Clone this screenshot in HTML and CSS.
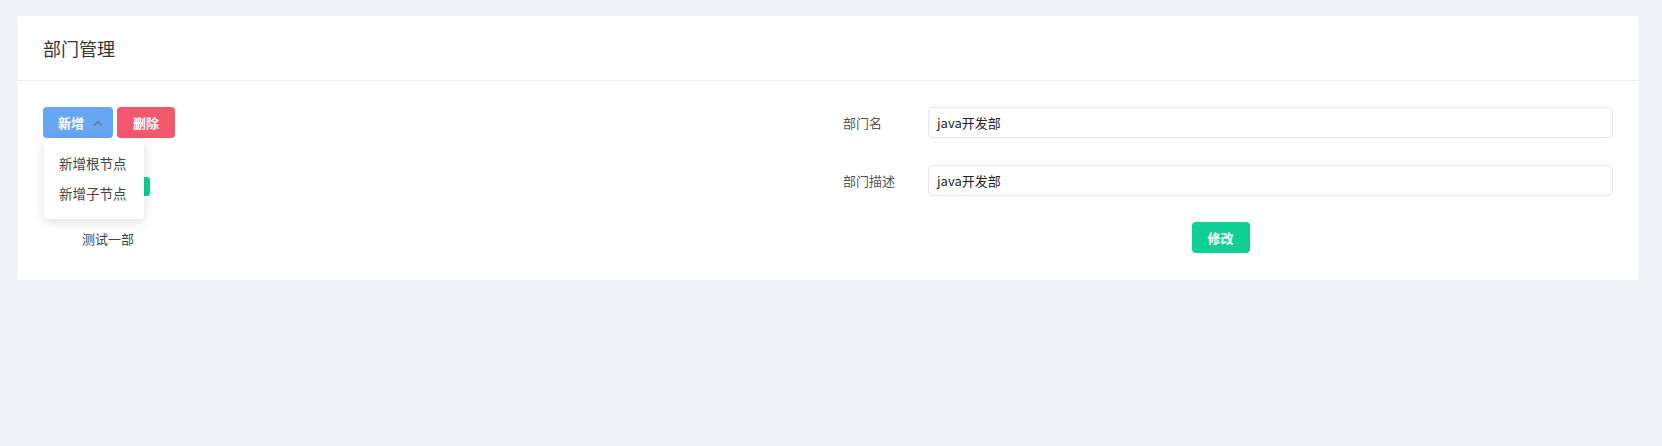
FILE: index.html
```html
<!DOCTYPE html>
<html lang="zh">
<head>
<meta charset="utf-8">
<title>部门管理</title>
<link rel="stylesheet" href="styles.css">
</head>
<body>
<div class="page">
  <div class="card">
    <div class="card-header">部门管理</div>
    <div class="card-body">
      <div class="col col-left">
        <div class="toolbar">
          <div class="dropdown">
            <button class="btn btn-blue btn-add">新增
              <svg class="chev" width="10" height="6" viewBox="0 0 10 6"><polyline points="1,5.5 5,1.5 9,5.5" fill="none" stroke="#6b7280" stroke-width="1.2"/></svg>
            </button>
            <ul class="menu">
              <li>新增根节点</li>
              <li>新增子节点</li>
            </ul>
          </div>
          <button class="btn btn-red">删除</button>
        </div>
        <div class="tree">
          <div class="node node-root"><span class="node-label selected">java开发部</span></div>
          <div class="node node-child"><span class="node-label">测试一部</span></div>
        </div>
      </div>
      <div class="col col-right">
        <div class="form-item">
          <label class="form-label">部门名</label>
          <div class="input">java开发部</div>
        </div>
        <div class="form-item">
          <label class="form-label">部门描述</label>
          <div class="input">java开发部</div>
        </div>
        <div class="form-actions">
          <button class="btn btn-green">修改</button>
        </div>
      </div>
    </div>
  </div>
</div>
</body>
</html>
```
FILE: styles.css
```css
* { box-sizing: border-box; }
html, body {
  margin: 0;
  padding: 0;
  background: #f0f3f7;
  font-family: "Noto Sans CJK SC", "Noto Sans", sans-serif;
  color: #333;
}
.page {
  padding: 16px 24px 16px 18px;
}
.card {
  background: #fff;
  border-radius: 4px;
}
.card-header {
  height: 65px;
  line-height: 64px;
  padding-left: 25px;
  font-size: 18px;
  color: #333;
  border-bottom: 1px solid #eceef2;
}
.card-body {
  display: grid;
  grid-template-columns: 1fr 1fr;
  padding: 26px 25px 27px 25px;
}
.col { min-width: 0; }
.col-left { position: relative; }
.toolbar {
  display: flex;
  gap: 4px;
}
.btn {
  height: 31px;
  border: none;
  border-radius: 4px;
  color: #fff;
  font-family: inherit;
  font-size: 13px;
  font-weight: 600;
  padding: 0 15px;
  line-height: 31px;
  cursor: pointer;
}
.btn-blue { background: #66a6f2; }
.btn-add {
  width: 70px;
  padding: 0 0 0 15px;
  text-align: left;
  display: flex;
  align-items: center;
}
.chev { margin-left: 9px; }
.btn-red { background: #f3586d; width: 58px; padding: 0; }
.btn-green { background: #10cf95; width: 58px; padding: 0; }
.dropdown { position: relative; }
.menu {
  position: absolute;
  top: 31px;
  left: 1px;
  width: 100px;
  margin: 0;
  padding: 10px 0 11px;
  list-style: none;
  background: #fff;
  border-radius: 4px;
  box-shadow: 0 3px 12px rgba(0, 0, 0, 0.12);
  z-index: 10;
}
.menu li {
  height: 30px;
  line-height: 30px;
  padding-left: 15px;
  font-size: 13.5px;
  color: #444;
}
.tree {
  padding-top: 39px;
  font-size: 13px;
}
.node { display: flex; }
.node-root { padding-left: 29px; }
.node-label {
  display: inline-block;
  height: 19px;
  line-height: 19px;
  padding: 0 8px 0 6px;
  border-radius: 3px;
  color: #444;
}
.selected { background: #10cf95; color: #fff; }
.node-child {
  padding-left: 33px;
  margin-top: 33px;
}
.col-right { padding-left: 15px; }
.form-item {
  display: flex;
  align-items: center;
  margin-bottom: 27px;
}
.form-label {
  width: 85px;
  font-size: 13px;
  color: #555;
}
.input {
  flex: 1;
  height: 31px;
  line-height: 29px;
  border: 1px solid #e4e7ed;
  border-radius: 4px;
  padding-left: 8px;
  font-size: 13px;
  color: #222;
}
.form-actions {
  display: flex;
  justify-content: center;
  margin-left: -15px;
  margin-top: -1px;
}
```
